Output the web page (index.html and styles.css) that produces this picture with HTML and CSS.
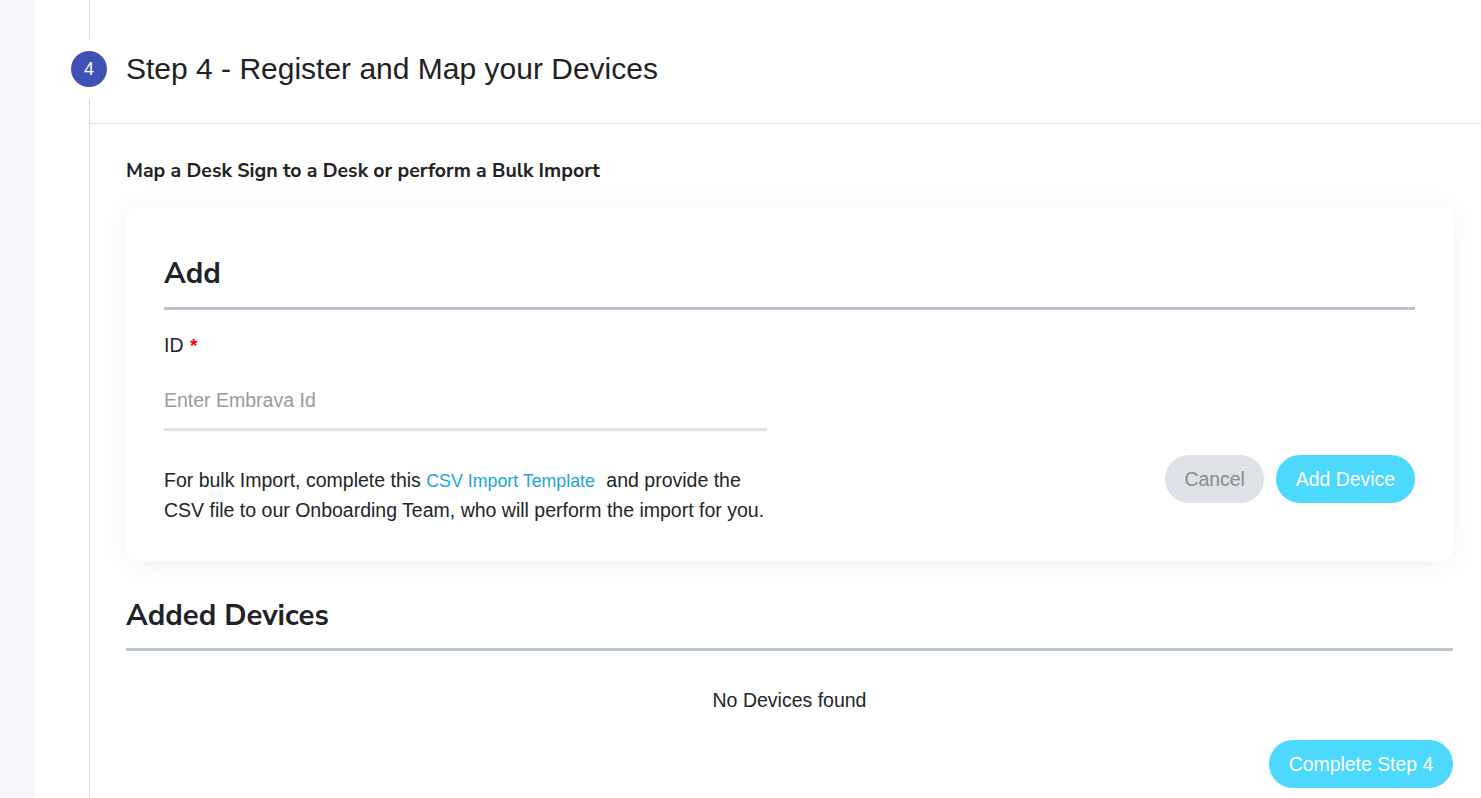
FILE: index.html
```html
<!DOCTYPE html>
<html lang="en">
<head>
<meta charset="utf-8">
<title>Step 4 - Register and Map your Devices</title>
<link rel="stylesheet" href="styles.css">
</head>
<body>
<div class="layout">
  <aside class="sidebar"></aside>
  <main class="main">
    <section class="step">
      <header class="step-head">
        <span class="step-num">4</span>
        <h1 class="step-title">Step 4 - Register and Map your Devices</h1>
      </header>
      <div class="step-body">
        <p class="intro">Map a Desk Sign to a Desk or perform a Bulk Import</p>
        <div class="card">
          <h2 class="card-title">Add</h2>
          <label class="field-label" for="embrava-id">ID <span class="req">*</span></label>
          <input class="field-input" id="embrava-id" type="text" placeholder="Enter Embrava Id">
          <div class="card-foot">
            <p class="bulk-text">For bulk Import, complete this <a class="link" href="#">CSV Import Template</a> and provide the<br>CSV file to our Onboarding Team, who will perform the import for you.</p>
            <div class="actions">
              <button class="btn btn-cancel" type="button">Cancel</button>
              <button class="btn btn-primary" type="button">Add Device</button>
            </div>
          </div>
        </div>
        <h2 class="section-title">Added Devices</h2>
        <p class="empty">No Devices found</p>
        <div class="complete-row">
          <button class="btn btn-primary btn-complete" type="button">Complete Step 4</button>
        </div>
      </div>
    </section>
  </main>
</div>
</body>
</html>
```

FILE: styles.css
```css
* {
  box-sizing: border-box;
}

html, body {
  margin: 0;
  padding: 0;
  background: #ffffff;
}

body {
  font-family: "Liberation Sans", Arial, sans-serif;
  color: #212529;
  overflow: hidden;
}

.layout {
  display: flex;
  min-height: 798px;
}

.sidebar {
  flex: none;
  width: 35px;
  background: #f4f6fa;
}

.main {
  flex: 1;
  padding-left: 54px;
}

.step {
  border-left: 1px solid #d9d9d9;
  min-height: 798px;
}

.step-head {
  display: flex;
  align-items: center;
  padding: 51px 0 36px;
  border-bottom: 1px solid #e3e3e3;
}

.step-num {
  flex: none;
  width: 36px;
  height: 36px;
  margin-left: -19px;
  border-radius: 50%;
  background: #3f51b5;
  color: #ffffff;
  font-size: 18px;
  display: flex;
  align-items: center;
  justify-content: center;
  box-shadow: 0 0 0 12px #ffffff;
}

.step-title {
  margin: 0 0 0 19px;
  font-size: 30px;
  font-weight: 400;
  line-height: 36px;
  color: #212121;
}

.step-body {
  padding: 35px 28px 0 36px;
}

.intro {
  margin: 0;
  font-family: "Nunito Sans", Lato, "Open Sans", sans-serif;
  font-weight: 700;
  font-size: 19.5px;
  line-height: 24px;
  color: #222222;
}

.card {
  margin-top: 24px;
  padding: 48px 38px 37px;
  background: #ffffff;
  border-radius: 12px;
  box-shadow: 0 2px 28px rgba(0, 0, 0, 0.06);
}

.card-title {
  margin: 0;
  padding-bottom: 16px;
  border-bottom: 3px solid #b9c3cf;
  font-family: "Nunito Sans", Lato, "Open Sans", sans-serif;
  font-weight: 700;
  font-size: 29.3px;
  line-height: 36px;
  color: #1f2226;
}

.field-label {
  display: block;
  margin-top: 23px;
  font-size: 19.5px;
  line-height: 24px;
  color: #212529;
}

.req {
  color: #ff0000;
  font-size: 19px;
  font-weight: 700;
  margin-left: 1px;
}

.field-input {
  display: block;
  width: 603px;
  height: 54px;
  margin-top: 19px;
  padding: 0 0 4px;
  border: 0;
  border-bottom: 3px solid #dde0e6;
  font-family: "Liberation Sans", Arial, sans-serif;
  font-size: 19.5px;
  color: #212529;
  background: transparent;
  outline: none;
}

.field-input::placeholder {
  color: #9a9a9a;
}

.card-foot {
  display: flex;
  justify-content: space-between;
  align-items: flex-start;
  margin-top: 24px;
}

.bulk-text {
  margin: 11px 0 -1px;
  max-width: 603px;
  font-size: 19.5px;
  line-height: 29px;
  color: #212529;
}

.link {
  color: #1ba4dc;
  text-decoration: none;
  font-size: 17.8px;
  margin-right: 6px;
}

.actions {
  display: flex;
  gap: 12px;
}

.btn {
  height: 48px;
  padding: 0 19px;
  border: 0;
  border-radius: 24px;
  font-family: "Liberation Sans", Arial, sans-serif;
  font-size: 19.4px;
  cursor: pointer;
}

.btn-cancel {
  background: #dfe1e8;
  color: #8a8a8a;
}

.btn-primary {
  background: #4dd8fe;
  color: #ffffff;
  padding: 0 20px;
}

.section-title {
  margin: 36px 0 0;
  padding-bottom: 15px;
  border-bottom: 3px solid #b8c6d2;
  font-family: "Nunito Sans", Lato, "Open Sans", sans-serif;
  font-weight: 700;
  font-size: 29.3px;
  line-height: 36px;
  color: #1f2226;
}

.empty {
  margin: 37px 0 0;
  text-align: center;
  font-size: 19.5px;
  line-height: 24px;
  color: #212529;
}

.complete-row {
  display: flex;
  justify-content: flex-end;
  margin-top: 28px;
}

.btn-complete {
  font-size: 19.4px;
  width: 184px;
  padding: 0;
}
```
